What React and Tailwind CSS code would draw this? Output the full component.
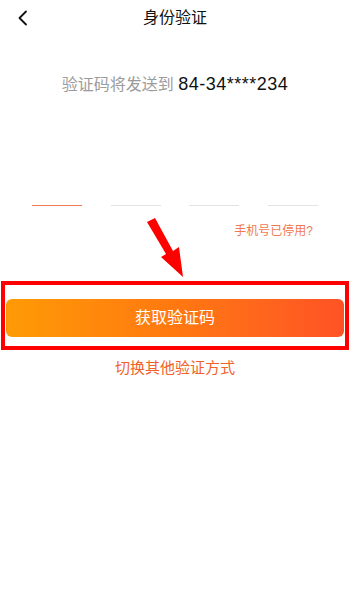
import React from 'react'

const font = { fontFamily: '"Liberation Sans", "Noto Sans CJK SC", sans-serif' }

export default function App() {
    return (
        <div className="relative w-[350px] h-[600px] bg-white overflow-hidden" style={font}>
            {/* Header */}
            <div className="grid grid-cols-[40px_1fr_40px] items-center h-[36px]">
                <div className="pl-[17px] flex items-center">
                    <svg width="12" height="16" viewBox="0 0 12 16" fill="none">
                        <polyline points="9,1.5 2.5,8 9,14.5" stroke="#111" strokeWidth="1.8" strokeLinecap="round" strokeLinejoin="round" />
                    </svg>
                </div>
                <div className="text-center text-[16px] text-[#111] leading-[36px]">身份验证</div>
                <div></div>
            </div>

            {/* Target phone */}
            <p className="mt-[36px] text-center text-[16px] leading-[24px]">
                <span className="text-[#9b9b9b]">验证码将发送到 </span>
                <span className="text-[#111] text-[18px] tracking-[0.5px]">84-34****234</span>
            </p>

            {/* Code inputs */}
            <div className="mt-[68px] px-[32px] flex justify-between items-end h-[41px]">
                <div className="w-[50px] h-[1.5px] bg-[#f47a4c]"></div>
                <div className="w-[50px] h-px bg-[#e3e3e3]"></div>
                <div className="w-[50px] h-px bg-[#e3e3e3]"></div>
                <div className="w-[50px] h-px bg-[#e3e3e3]"></div>
            </div>

            <div className="mt-[16px] pr-[37px] text-right text-[12px] leading-[18px] text-[#f07a50]">手机号已停用?</div>

            {/* Action */}
            <button className="mt-[59px] mx-[6px] w-[338px] h-[38px] rounded-[6px] bg-gradient-to-r from-[#ff9a05] via-[#ff7810] to-[#ff5224] text-white text-[16px]">
                获取验证码
            </button>

            <div className="mt-[20px] text-center text-[15px] leading-[22px] text-[#f0622a]">切换其他验证方式</div>

            {/* Annotation overlays */}
            <div className="absolute left-[1px] top-[281px] w-[348px] h-[69px] border-[4px] border-[#ff0000] pointer-events-none"></div>
            <svg className="absolute left-[140px] top-[215px] pointer-events-none" width="50" height="65" viewBox="0 0 50 65">
                <polygon points="7,7 15,3 33,36 39,32 43,62 21,42 26,39" fill="#ff0000" />
            </svg>
        </div>
    )
}
